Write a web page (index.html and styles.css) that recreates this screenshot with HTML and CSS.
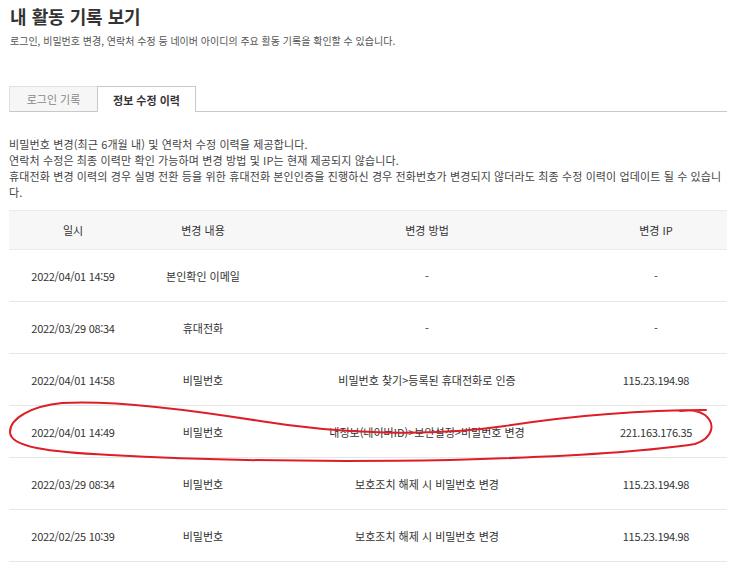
FILE: index.html
```html
<!DOCTYPE html>
<html lang="ko">
<head>
<meta charset="utf-8">
<title>내 활동 기록 보기</title>
<link rel="stylesheet" href="styles.css">
</head>
<body>
<div class="page">
  <h1 class="title">내 활동 기록 보기</h1>
  <p class="desc">로그인, 비밀번호 변경, 연락처 수정 등 네이버 아이디의 주요 활동 기록을 확인할 수 있습니다.</p>

  <div class="tabs">
    <a class="tab">로그인 기록</a>
    <a class="tab tab-active">정보 수정 이력</a>
    <span class="tab-rest"></span>
  </div>

  <div class="notice">
    <p>비밀번호 변경(최근 6개월 내) 및 연락처 수정 이력을 제공합니다.</p>
    <p>연락처 수정은 최종 이력만 확인 가능하며 변경 방법 및 IP는 현재 제공되지 않습니다.</p>
    <p>휴대전화 변경 이력의 경우 실명 전환 등을 위한 휴대전화 본인인증을 진행하신 경우 전화번호가 변경되지 않더라도 최종 수정 이력이 업데이트 될 수 있습니다.</p>
  </div>

  <table class="history">
    <colgroup>
      <col class="c-date"><col class="c-type"><col class="c-method"><col class="c-ip">
    </colgroup>
    <thead>
      <tr><th>일시</th><th>변경 내용</th><th>변경 방법</th><th>변경 IP</th></tr>
    </thead>
    <tbody>
      <tr><td class="num">2022/04/01 14:59</td><td>본인확인 이메일</td><td>-</td><td>-</td></tr>
      <tr><td class="num">2022/03/29 08:34</td><td>휴대전화</td><td>-</td><td>-</td></tr>
      <tr><td class="num">2022/04/01 14:58</td><td>비밀번호</td><td>비밀번호 찾기&gt;등록된 휴대전화로 인증</td><td class="num">115.23.194.98</td></tr>
      <tr><td class="num">2022/04/01 14:49</td><td>비밀번호</td><td>내정보(네이버ID)&gt;보안설정&gt;비밀번호 변경</td><td class="num">221.163.176.35</td></tr>
      <tr><td class="num">2022/03/29 08:34</td><td>비밀번호</td><td>보호조치 해제 시 비밀번호 변경</td><td class="num">115.23.194.98</td></tr>
      <tr><td class="num">2022/02/25 10:39</td><td>비밀번호</td><td>보호조치 해제 시 비밀번호 변경</td><td class="num">115.23.194.98</td></tr>
    </tbody>
  </table>

  <!-- hand-drawn highlight around the 14:49 password change -->
  <svg class="scribble" viewBox="0 0 743 582" width="743" height="582" aria-hidden="true">
    <path d="M706 410 C640 410 570 416 505 426 C430 437 340 434 260 421 C185 409 110 400 62 403 C32 406 10 418 10 432 C10 447 48 452 110 455 C200 460 330 462 450 460 C560 457 650 451 695 444 C713 438 716 424 705 415 C698 410 690 410 680 411"/>
  </svg>
</div>
</body>
</html>
```

FILE: styles.css
```css
html, body {
  margin: 0;
  padding: 0;
  background: #fff;
}

body {
  font-family: "Noto Sans CJK KR", "Noto Sans", sans-serif;
  color: #444;
}

.page {
  position: relative;
  width: 718px;
  padding: 4px 0 0 9px;
}

.title {
  margin: 0 0 0 1px;
  font-size: 18px;
  line-height: 24px;
  font-weight: 700;
  color: #333;
  letter-spacing: -0.4px;
  word-spacing: 1px;
}

.desc {
  margin: 5px 0 0 1px;
  font-size: 10px;
  line-height: 16px;
  color: #555;
}

.tabs {
  display: flex;
  margin-top: 37px;
  height: 26px;
}

.tab {
  display: flex;
  align-items: center;
  justify-content: center;
  box-sizing: border-box;
  height: 26px;
  font-size: 11px;
  color: #888;
}

.tab:first-child {
  width: 88px;
  background: #f6f6f6;
  border: 1px solid #e0e0e0;
  border-bottom-color: #c8c8c8;
  border-right: none;
}

.tab-active {
  width: 99px;
  background: #fff;
  color: #333;
  font-weight: 700;
  border: 1px solid #c8c8c8;
  border-bottom: none;
}

.tab-rest {
  flex: 1;
  border-bottom: 1px solid #c8c8c8;
}

.notice {
  margin-top: 24px;
  font-size: 11px;
  line-height: 16px;
  letter-spacing: 0.12px;
  color: #444;
}

.notice p {
  margin: 0;
}

.history {
  margin-top: 10px;
  width: 718px;
  border-collapse: collapse;
  table-layout: fixed;
  font-size: 11px;
  color: #333;
}

.c-date { width: 128px; }
.c-type { width: 132px; }
.c-method { width: 316px; }
.c-ip { width: 142px; }

.history th {
  height: 38px;
  padding: 0;
  background: #f7f7f7;
  font-weight: 400;
  border-top: 1px solid #ebebeb;
  border-bottom: 1px solid #ebebeb;
  text-align: center;
}

.history td {
  height: 51px;
  padding: 0;
  text-align: center;
  border-bottom: 1px solid #e6e6e6;
}

.history .num {
  letter-spacing: -0.3px;
}

.scribble {
  position: absolute;
  left: 0;
  top: 0;
  pointer-events: none;
}

.scribble path {
  fill: none;
  stroke: #dc1f26;
  stroke-width: 2;
  stroke-linecap: round;
  stroke-linejoin: round;
}
```
